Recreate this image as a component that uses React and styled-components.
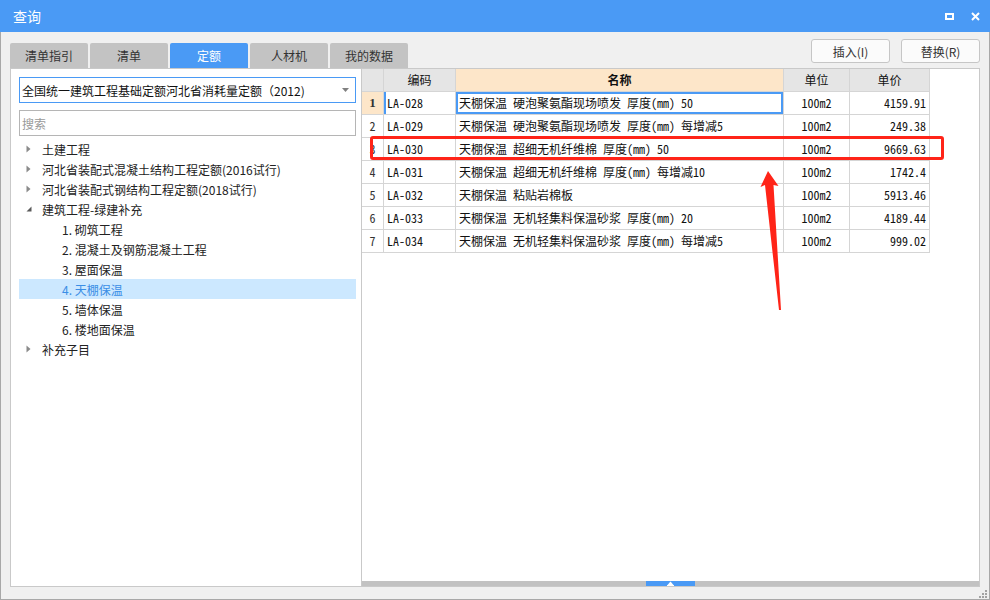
import React from "react";
import styled, { createGlobalStyle } from "styled-components";

const UI_FONT = `"Noto Sans CJK SC", "Noto Sans", sans-serif`;
const CELL_FONT = `"Noto Sans Mono CJK SC", "Liberation Mono", "Noto Sans CJK SC", monospace`;
const BLUE = "#4a9af5";

const GlobalStyle = createGlobalStyle`
  html, body {
    margin: 0;
    padding: 0;
    width: 990px;
    height: 600px;
    overflow: hidden;
    background: #f0f0f0;
  }
  body {
    font-family: ${UI_FONT};
    font-size: 12px;
    color: #222;
  }
  * { box-sizing: border-box; }
`;

const tree = [
  { label: "土建工程", level: 0, caret: "closed" },
  { label: "河北省装配式混凝土结构工程定额(2016试行)", level: 0, caret: "closed" },
  { label: "河北省装配式钢结构工程定额(2018试行)", level: 0, caret: "closed" },
  { label: "建筑工程-绿建补充", level: 0, caret: "open" },
  { label: "1. 砌筑工程", level: 1 },
  { label: "2. 混凝土及钢筋混凝土工程", level: 1 },
  { label: "3. 屋面保温", level: 1 },
  { label: "4. 天棚保温", level: 1, selected: true },
  { label: "5. 墙体保温", level: 1 },
  { label: "6. 楼地面保温", level: 1 },
  { label: "补充子目", level: 0, caret: "closed" },
];

const rows = [
  ["LA-028", "天棚保温 硬泡聚氨酯现场喷发 厚度(mm) 50", "4159.91"],
  ["LA-029", "天棚保温 硬泡聚氨酯现场喷发 厚度(mm) 每增减5", "249.38"],
  ["LA-030", "天棚保温 超细无机纤维棉 厚度(mm) 50", "9669.63"],
  ["LA-031", "天棚保温 超细无机纤维棉 厚度(mm) 每增减10", "1742.4"],
  ["LA-032", "天棚保温 粘贴岩棉板", "5913.46"],
  ["LA-033", "天棚保温 无机轻集料保温砂浆 厚度(mm) 20", "4189.44"],
  ["LA-034", "天棚保温 无机轻集料保温砂浆 厚度(mm) 每增减5", "999.02"],
];

export default function App() {
  return (
    <>
      <GlobalStyle />
      <Window>
        <TitleBar>
          <span>查询</span>
          <TitleIcons>
            <svg width="9" height="7" viewBox="0 0 9 7">
              <rect x="1" y="1" width="7" height="5" fill="none" stroke="#fff" strokeWidth="2" />
            </svg>
            <svg width="9" height="9" viewBox="0 0 9 9">
              <path d="M1 1L8 8M8 1L1 8" stroke="#fff" strokeWidth="2" />
            </svg>
          </TitleIcons>
        </TitleBar>

        <Frame>
          <TopRow>
            <Tabs>
              {["清单指引", "清单", "定额", "人材机", "我的数据"].map((t) => (
                <Tab key={t} $active={t === "定额"}>{t}</Tab>
              ))}
            </Tabs>
            <Actions>
              <ActionButton>插入(I)</ActionButton>
              <ActionButton>替换(R)</ActionButton>
            </Actions>
          </TopRow>

          <Content>
            <LeftPanel>
              <Select>
                <span>全国统一建筑工程基础定额河北省消耗量定额（2012)</span>
                <svg width="7" height="4" viewBox="0 0 7 4">
                  <path d="M0 0H7L3.5 4Z" fill="#808080" />
                </svg>
              </Select>
              <Search placeholder="搜索" />
              <Tree>
                {tree.map((n) => (
                  <TreeRow key={n.label} $level={n.level} $selected={n.selected}>
                    {n.level === 0 && (
                      <Caret>
                        {n.caret === "open" ? (
                          <svg width="6" height="6" viewBox="0 0 6 6">
                            <path d="M5.5 0.5V5.5H0.5Z" fill="#5a5a5a" />
                          </svg>
                        ) : (
                          <svg width="5" height="8" viewBox="0 0 5 8">
                            <path d="M0.5 0.5L4.5 4L0.5 7.5Z" fill="#8a8a8a" />
                          </svg>
                        )}
                      </Caret>
                    )}
                    {n.label}
                  </TreeRow>
                ))}
              </Tree>
            </LeftPanel>

            <RightPanel>
              <TableArea>
                <GridRow $head>
                  <Cell $bg="#e5e5e5" $align="center" />
                  <Cell $bg="#e5e5e5" $align="center" $ui>编码</Cell>
                  <Cell $bg="#fde6c9" $align="center" $ui $bold>名称</Cell>
                  <Cell $bg="#e5e5e5" $align="center" $ui>单位</Cell>
                  <Cell $bg="#e5e5e5" $align="center" $ui>单价</Cell>
                </GridRow>
                {rows.map(([code, name, price], i) => (
                  <GridRow key={code}>
                    <RowNum $current={i === 0}>{i + 1}</RowNum>
                    <Cell $leftMark={i === 0}>{code}</Cell>
                    <Cell $focused={i === 0}>{name}</Cell>
                    <Cell $align="center">100m2</Cell>
                    <Cell $align="flex-end">{price}</Cell>
                  </GridRow>
                ))}
              </TableArea>
              <HScroll>
                <ScrollThumb>
                  <svg width="7" height="5" viewBox="0 0 7 5">
                    <path d="M3.5 0.5L6.5 4H0.5Z" fill="#fff" />
                    <rect x="0" y="4" width="7" height="1" fill="#fff" />
                  </svg>
                </ScrollThumb>
              </HScroll>

              <Highlight />
              <Arrow width="30" height="145" viewBox="0 0 30 145">
                <path d="M10 2L20.5 17L15.5 16L23 141H21L7 16L2.5 18Z" fill="#ff2418" />
              </Arrow>
            </RightPanel>
          </Content>
        </Frame>

        <Grip width="9" height="9" viewBox="0 0 9 9">
          <rect x="7" y="1" width="2" height="2" fill="#a3a3a3" />
          <rect x="4" y="4" width="2" height="2" fill="#a3a3a3" />
          <rect x="7" y="4" width="2" height="2" fill="#a3a3a3" />
          <rect x="1" y="7" width="2" height="2" fill="#a3a3a3" />
          <rect x="4" y="7" width="2" height="2" fill="#a3a3a3" />
          <rect x="7" y="7" width="2" height="2" fill="#a3a3a3" />
        </Grip>
      </Window>
    </>
  );
}

const Window = styled.div`
  position: relative;
  width: 990px;
  height: 600px;
  display: flex;
  flex-direction: column;
  background: #f0f0f0;
`;

const TitleBar = styled.div`
  height: 32px;
  flex: none;
  background: ${BLUE};
  color: #fff;
  font-size: 14px;
  display: flex;
  align-items: center;
  justify-content: space-between;
  padding: 0 10px 0 13px;
`;

const TitleIcons = styled.div`
  display: flex;
  align-items: center;
  gap: 17px;
  svg { display: block; }
`;

const Frame = styled.div`
  flex: 1;
  display: flex;
  flex-direction: column;
  border: 1px solid #a8a8a8;
  border-top: none;
  padding: 7px 9px 12px 9px;
`;

const TopRow = styled.div`
  height: 29px;
  display: flex;
  justify-content: space-between;
  align-items: flex-start;
`;

const Tabs = styled.div`
  display: flex;
  gap: 2px;
  margin-top: 4px;
`;

const Tab = styled.div`
  width: 78px;
  height: 25px;
  display: flex;
  align-items: center;
  justify-content: center;
  border-radius: 2px 2px 0 0;
  background: ${(p) => (p.$active ? BLUE : "#c3c3c3")};
  color: ${(p) => (p.$active ? "#fff" : "#333")};
`;

const Actions = styled.div`
  display: flex;
  gap: 11px;
`;

const ActionButton = styled.button`
  width: 79px;
  height: 24px;
  border: 1px solid #c6c6c6;
  border-radius: 3px;
  background: #fbfbfb;
  color: #333;
  font-family: ${UI_FONT};
  font-size: 12px;
  padding: 0;
`;

const Content = styled.div`
  display: flex;
  height: 519px;
`;

const LeftPanel = styled.div`
  width: 352px;
  flex: none;
  display: flex;
  flex-direction: column;
  background: #fff;
  border: 1px solid #c9c9c9;
  padding: 8px 5px 0 8px;
`;

const Select = styled.div`
  height: 26px;
  border: 1px solid ${BLUE};
  display: flex;
  align-items: center;
  justify-content: space-between;
  padding: 0 6px 0 2px;
  color: #111;
  svg { display: block; }
`;

const Search = styled.input`
  height: 26px;
  margin-top: 7px;
  border: 1px solid #b5b5b5;
  padding: 0 2px;
  font-family: ${UI_FONT};
  font-size: 12px;
  outline: none;
  &::placeholder { color: #9a9a9a; }
`;

const Tree = styled.div`
  margin-top: 3px;
  display: flex;
  flex-direction: column;
`;

const TreeRow = styled.div`
  height: 20px;
  display: flex;
  align-items: center;
  padding-left: ${(p) => (p.$level ? 43 : 7)}px;
  background: ${(p) => (p.$selected ? "#cce8ff" : "transparent")};
  color: ${(p) => (p.$selected ? "#3a8ee6" : "#222")};
  white-space: nowrap;
`;

const Caret = styled.span`
  width: 16px;
  display: flex;
  align-items: center;
  svg { display: block; }
`;

const RightPanel = styled.div`
  position: relative;
  flex: 1;
  display: flex;
  flex-direction: column;
  background: #fff;
  border: 1px solid #c9c9c9;
  border-left: none;
`;

const TableArea = styled.div`
  flex: 1;
`;

const GridRow = styled.div`
  display: grid;
  grid-template-columns: 22px 72px 328px 66px 80px;
  height: 23px;
`;

const Cell = styled.div`
  display: flex;
  align-items: center;
  justify-content: ${(p) => p.$align || "flex-start"};
  padding: 0 3px 1px;
  border-right: 1px solid #d5d5d5;
  border-bottom: 1px solid #d5d5d5;
  background: ${(p) => p.$bg || "#fff"};
  font-family: ${(p) => (p.$ui ? UI_FONT : CELL_FONT)};
  font-weight: ${(p) => (p.$bold ? 700 : 400)};
  font-size: 12px;
  color: #111;
  white-space: nowrap;
  overflow: hidden;
  box-shadow: ${(p) =>
    p.$focused ? `inset 0 0 0 2px ${BLUE}` : p.$leftMark ? `inset 2px 0 0 ${BLUE}` : "none"};
`;

const RowNum = styled(Cell)`
  justify-content: center;
  padding: 0 0 1px;
  background: ${(p) => (p.$current ? "#fde6c9" : "#fff")};
  font-family: ${(p) => (p.$current ? `"Liberation Serif", serif` : CELL_FONT)};
  font-weight: ${(p) => (p.$current ? 700 : 400)};
  font-size: ${(p) => (p.$current ? 13 : 12)}px;
  color: #333;
`;

const HScroll = styled.div`
  height: 5px;
  flex: none;
  background: #c2c2c2;
  display: flex;
  justify-content: center;
`;

const ScrollThumb = styled.div`
  width: 49px;
  background: ${BLUE};
  display: flex;
  align-items: center;
  justify-content: center;
  svg { display: block; }
`;

const Highlight = styled.div`
  position: absolute;
  left: 8px;
  top: 67px;
  width: 574px;
  height: 24px;
  border: 3px solid #ff2418;
  border-radius: 3px;
  pointer-events: none;
`;

const Arrow = styled.svg`
  position: absolute;
  left: 396px;
  top: 100px;
  pointer-events: none;
`;

const Grip = styled.svg`
  position: absolute;
  right: 3px;
  bottom: 2px;
`;
